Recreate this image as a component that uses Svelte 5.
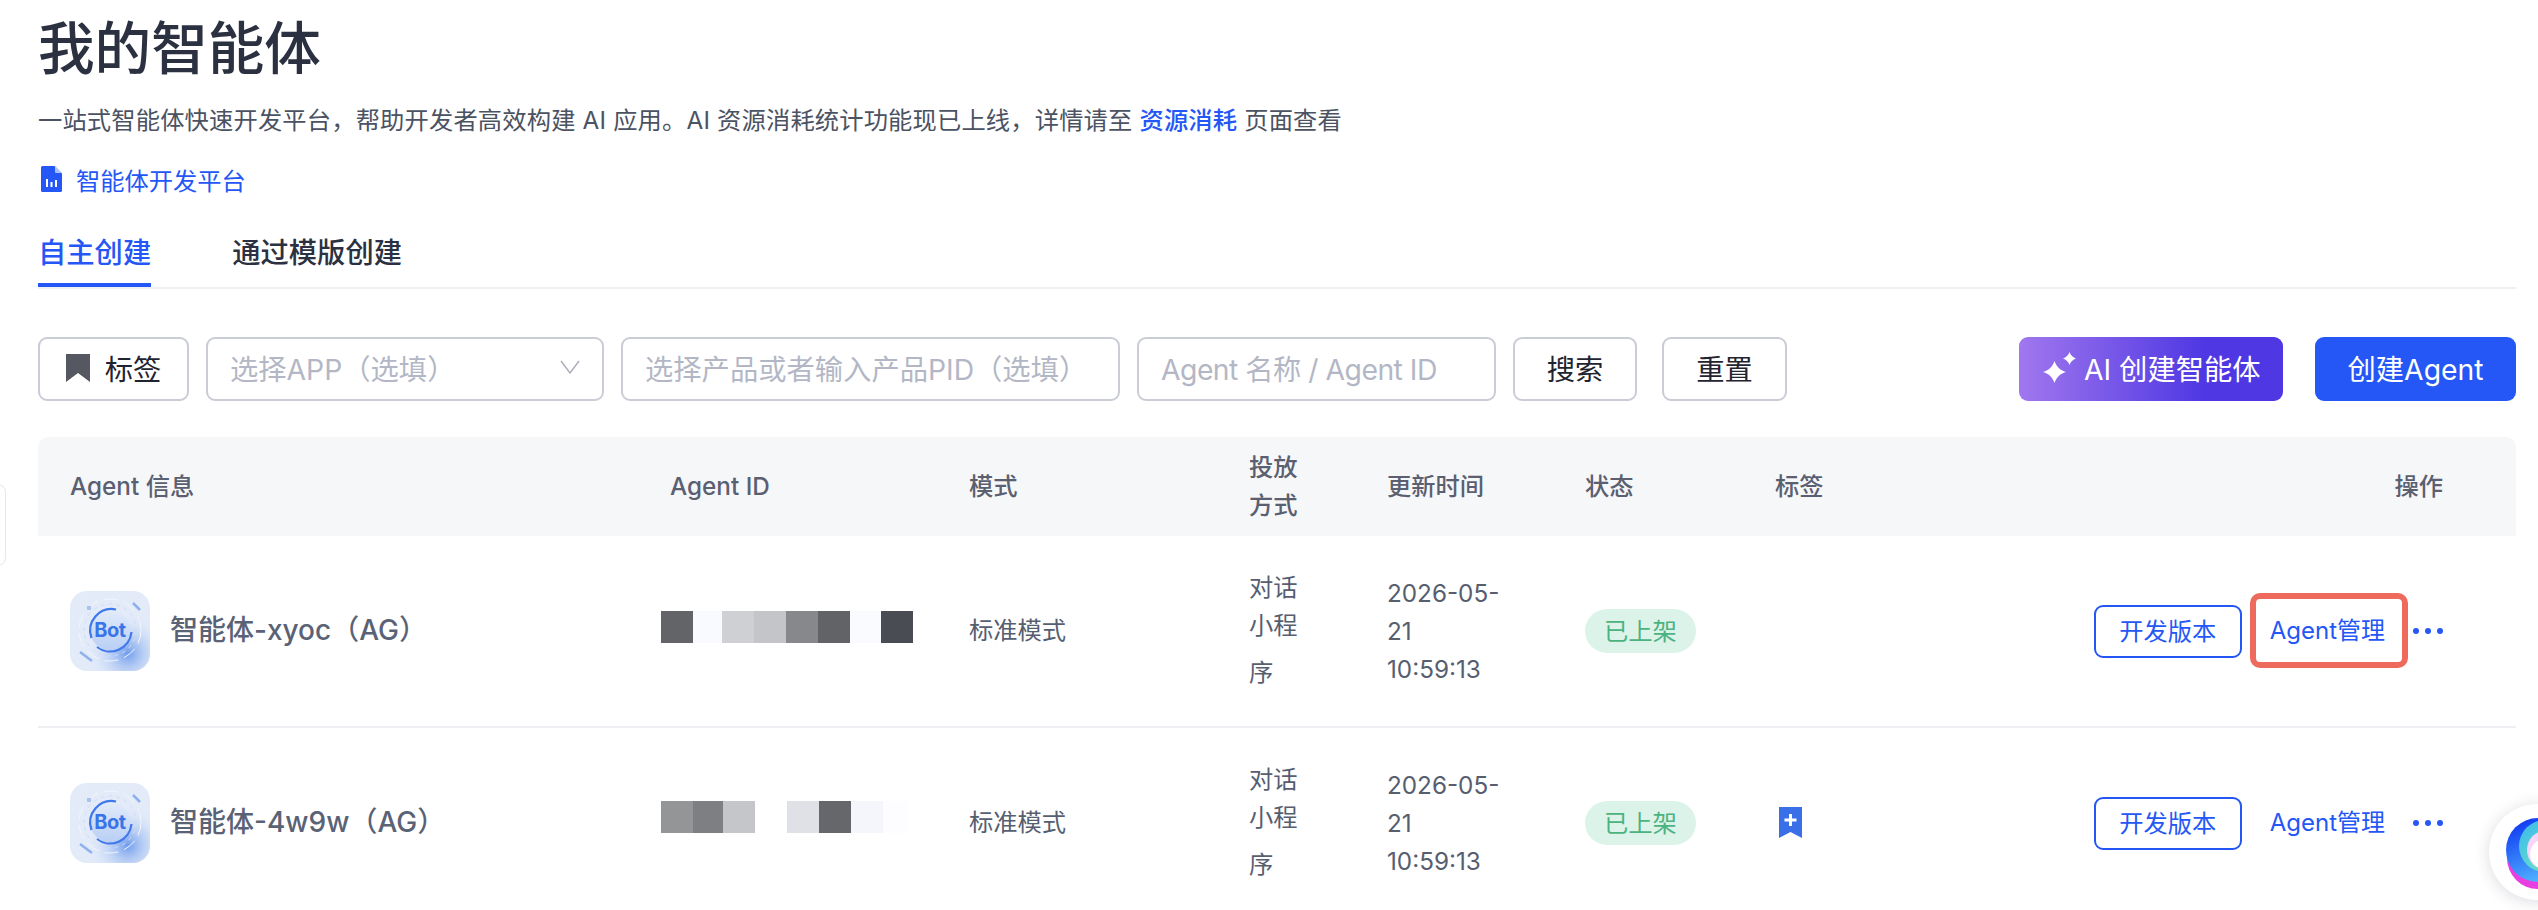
<script>
  const agents = [
    {
      name: '智能体-xyoc（AG）',
      blur: [
        [32, '#636468'], [29, '#f9faff'], [32, '#cfd0d4'], [32, '#c4c5c9'],
        [32, '#87888c'], [32, '#626367'], [31, '#fafbff'], [32, '#4a4c54']
      ],
      blurShift: -8,
      tagged: false,
      highlight: true
    },
    {
      name: '智能体-4w9w（AG）',
      blur: [
        [32, '#949597'], [30, '#7e7f83'], [32, '#c5c6ca'], [32, '#ffffff'],
        [32, '#e0e1e6'], [32, '#66676b'], [32, '#f5f6fc'], [25, '#fdfdff']
      ],
      blurShift: -12,
      tagged: true,
      highlight: false
    }
  ]
</script>

<div class="page">
  <h1 class="title">我的智能体</h1>
  <p class="desc">一站式智能体快速开发平台，帮助开发者高效构建 AI 应用。AI 资源消耗统计功能现已上线，详情请至 <a href="#usage" class="usage">资源消耗</a> 页面查看</p>
  <a href="#platform" class="doc">
    <svg width="21" height="26" viewBox="0 0 21 26">
      <path d="M1.5 0H13.5L21 7.5V24.5A1.5 1.5 0 0 1 19.5 26H1.5A1.5 1.5 0 0 1 0 24.5V1.5A1.5 1.5 0 0 1 1.5 0Z" fill="#2457f5" />
      <path d="M14 0L21 7H15A1 1 0 0 1 14 6Z" fill="#a9c0fb" />
      <path d="M5 13h2v8H5zM9.500 16h2v5h-2zM14 14h2v7h-2z" fill="#fff" />
    </svg>
    智能体开发平台
  </a>

  <nav class="tabs">
    <button class="tab active">自主创建</button>
    <button class="tab">通过模版创建</button>
  </nav>

  <div class="filters">
    <button class="btn tag-btn">
      <svg width="24" height="28" viewBox="0 0 24 28"><path d="M0 0H24V28L12 19L0 28Z" fill="#555860" /></svg>
      标签
    </button>
    <div class="field select">
      <span>选择APP（选填）</span>
      <svg width="20" height="14" viewBox="0 0 20 14"><path d="M1 1L10 13L19 1" fill="none" stroke="#a9adba" stroke-width="1.4" /></svg>
    </div>
    <div class="field product"><span>选择产品或者输入产品PID（选填）</span></div>
    <div class="field name"><span>Agent 名称 / Agent ID</span></div>
    <button class="btn search">搜索</button>
    <button class="btn reset">重置</button>
    <button class="btn ai">
      <svg width="33" height="31" viewBox="0 0 33 31">
        <path d="M11.500 9C13 14 17 18.500 23 20C17 21.500 13 26 11.500 31C10 26 6 21.500 0 20C6 18.500 10 14 11.500 9Z" fill="#fff" />
        <path d="M26.500 0C27.500 3 30 5.500 33 6.500C30 7.500 27.500 10 26.500 13C25.500 10 23 7.500 20 6.500C23 5.500 25.500 3 26.500 0Z" fill="#fff" />
      </svg>
      AI 创建智能体
    </button>
    <button class="btn create">创建Agent</button>
  </div>

  <div class="table">
    <div class="row head">
      <div class="cell">Agent 信息</div>
      <div class="cell">Agent ID</div>
      <div class="cell">模式</div>
      <div class="cell narrow">投放方式</div>
      <div class="cell">更新时间</div>
      <div class="cell">状态</div>
      <div class="cell">标签</div>
      <div class="cell ops">操作</div>
    </div>

    {#each agents as agent}
      <div class="row body">
        <div class="cell info">
          <svg class="avatar" width="80" height="80" viewBox="0 0 80 80">
            <defs>
              <radialGradient id="glow" cx="0.72" cy="0.78" r="0.5">
                <stop offset="0" stop-color="#6f9cec" />
                <stop offset="1" stop-color="#dfe8f8" stop-opacity="0" />
              </radialGradient>
              <linearGradient id="disc" x1="0" y1="0" x2="0" y2="1">
                <stop offset="0" stop-color="#e2ebfa" />
                <stop offset="1" stop-color="#b9cff5" />
              </linearGradient>
            </defs>
            <rect width="80" height="80" rx="17" fill="#e3ebf9" />
            <rect width="80" height="80" rx="17" fill="url(#glow)" />
            <circle cx="40" cy="39" r="31" fill="none" stroke="#f2f6fd" stroke-width="1" stroke-dasharray="14 6" />
            <circle cx="40" cy="39" r="26" fill="none" stroke="#cfdcf4" stroke-width="1" stroke-dasharray="4 4" />
            <circle cx="40" cy="39" r="20" fill="url(#disc)" />
            <path d="M21.500 47A21.500 21.500 0 0 1 46 18.500" fill="none" stroke="#3f78ea" stroke-width="2.200" />
            <path d="M27 56A21.500 21.500 0 0 0 61.500 41" fill="none" stroke="#3f78ea" stroke-width="2.200" />
            <path d="M63 12L70 19M10 61L22 70" stroke="#8db1ee" stroke-width="2.500" />
            <rect x="17" y="15" width="4" height="4" fill="#a9c2ef" />
            <text x="40" y="46" text-anchor="middle" class="bot">Bot</text>
          </svg>
          <span class="agent-name">{agent.name}</span>
        </div>
        <div class="cell"><div class="blur" style="margin-top:{agent.blurShift}px">
          {#each agent.blur as [w, c]}<i style="width:{w}px;background:{c}"></i>{/each}
        </div></div>
        <div class="cell mode">标准模式</div>
        <div class="cell channel"><span>对话</span><span>小程</span><span class="last">序</span></div>
        <div class="cell date">2026-05-21 10:59:13</div>
        <div class="cell"><span class="status">已上架</span></div>
        <div class="cell">
          {#if agent.tagged}
            <svg class="tag-mark" width="23" height="31" viewBox="0 0 23 31">
              <path d="M0 0H23V31L11.500 25L0 31Z" fill="#3a6fe8" />
              <path d="M10 7h3v4.500h4.500v3H13V19h-3v-4.500H5.500v-3H10Z" fill="#fff" />
            </svg>
          {/if}
        </div>
        <div class="cell ops actions">
          <button class="version">开发版本</button>
          <a href="#manage" class="manage" class:marked={agent.highlight}>Agent管理</a>
          <span class="more"><i></i><i></i><i></i></span>
        </div>
      </div>
    {/each}
  </div>

  <div class="side-panel"></div>
  <div class="assistant">
    <svg width="96" height="96" viewBox="0 0 96 96">
      <defs>
        <linearGradient id="blue" x1="0" y1="0" x2="0.4" y2="1">
          <stop offset="0" stop-color="#0a2bf0" />
          <stop offset="1" stop-color="#4db0ff" />
        </linearGradient>
        <linearGradient id="teal" x1="0" y1="0" x2="1" y2="1">
          <stop offset="0" stop-color="#38b6f0" />
          <stop offset="1" stop-color="#7cf3b4" />
        </linearGradient>
      </defs>
      <circle cx="49" cy="54" r="31" fill="#e83fe0" />
      <circle cx="49" cy="46" r="32" fill="url(#blue)" />
      <circle cx="56" cy="42" r="26" fill="url(#teal)" />
      <circle cx="58" cy="46" r="20" fill="#f6d5f6" />
      <circle cx="56" cy="50" r="15" fill="#fff" />
    </svg>
  </div>
</div>

<style>
  :global(body) {
    background: #fff;
  }

  .page {
    position: relative;
    box-sizing: border-box;
    width: 2538px;
    height: 910px;
    overflow: hidden;
    padding: 11px 22px 0 38px;
    font-family: Inter, "Noto Sans CJK SC", sans-serif;
    font-size: 24.28px;
    color: #565e70;
    background: #fff;
  }

  .title {
    margin: 0;
    font-size: 56.6px;
    line-height: 76px;
    font-weight: 500;
    color: #2b3140;
  }

  .desc {
    margin: 14px 0 0;
    line-height: 38px;
    letter-spacing: 0.17px;
    color: #4b5262;
  }

  .usage {
    color: #2457f5;
    font-weight: 500;
    text-decoration: none;
  }

  .doc {
    display: flex;
    align-items: center;
    gap: 14px;
    margin-top: 21px;
    padding-left: 3px;
    height: 38px;
    color: #2457f5;
    text-decoration: none;
  }

  .tabs {
    display: flex;
    gap: 81px;
    margin-top: 36px;
    border-bottom: 2px solid #eeeff3;
  }

  .tab {
    padding: 0 0 11px;
    border: 0;
    border-bottom: 4px solid transparent;
    background: none;
    font: inherit;
    font-size: 28.3px;
    line-height: 38px;
    font-weight: 500;
    color: #2b3140;
  }

  .tab.active {
    color: #2457f5;
    border-bottom-color: #2457f5;
  }

  .filters {
    display: flex;
    gap: 17px;
    margin-top: 48px;
    height: 64px;
  }

  .btn,
  .field {
    box-sizing: border-box;
    display: flex;
    align-items: center;
    height: 64px;
    border: 2px solid #caccd6;
    border-radius: 9px;
    background: #fff;
    font: inherit;
    font-size: 28.3px;
    padding-bottom: 4px;
  }

  .btn {
    justify-content: center;
    color: #1f2430;
  }

  .tag-btn {
    width: 151px;
    gap: 15px;
  }

  .field {
    padding-left: 22px;
    padding-right: 22px;
    color: #b3b7c5;
    white-space: nowrap;
  }

  .select {
    width: 398px;
    justify-content: space-between;
  }

  .product {
    width: 499px;
  }

  .name {
    width: 359px;
    letter-spacing: -0.5px;
  }

  .search {
    width: 124px;
  }

  .reset {
    width: 125px;
    margin-left: 8px;
  }

  .ai {
    width: 264px;
    margin-left: auto;
    justify-content: flex-start;
    padding-left: 24px;
    gap: 8px;
    border: 0;
    color: #fff;
    background: linear-gradient(90deg, #a077ee 0%, #4f38e3 70%);
  }

  .create {
    width: 201px;
    margin-left: 15px;
    border: 0;
    color: #fff;
    background: #2457f5;
  }

  .table {
    margin-top: 36px;
  }

  .row {
    display: grid;
    grid-template-columns: 600px 299px 280px 138px 198px 190px 1fr 580px;
    align-items: center;
  }

  .head {
    box-sizing: border-box;
    height: 99px;
    padding-bottom: 2px;
    background: #f6f7f9;
    border-radius: 10px 10px 0 0;
    font-weight: 500;
    line-height: 38px;
    color: #5a6070;
  }

  .body {
    box-sizing: border-box;
    height: 192px;
    border-bottom: 2px solid #eeeff3;
    line-height: 38px;
  }

  .cell {
    padding-left: 32px;
  }

  .narrow,
  .channel {
    padding-right: 50px;
  }

  .channel {
    margin-top: -4px;
  }

  .channel span {
    display: block;
  }

  .channel .last {
    margin-top: 9px;
  }

  .date {
    padding-right: 50px;
  }

  .mode {
    padding-bottom: 2px;
  }

  .ops {
    padding: 0 73px 0 0;
    text-align: right;
  }

  .info {
    display: flex;
    align-items: center;
    gap: 20px;
  }

  .avatar {
    flex: none;
  }

  .bot {
    font-size: 20px;
    font-weight: 700;
    letter-spacing: -0.5px;
    fill: #3a74ea;
  }

  .agent-name {
    padding-bottom: 2px;
    font-size: 28px;
    font-weight: 500;
    color: #5a6275;
  }

  .blur {
    display: flex;
    height: 32px;
    margin-left: -9px;
  }

  .blur i {
    display: block;
  }

  .status {
    display: inline-block;
    padding: 0 19px;
    height: 44px;
    line-height: 44px;
    border-radius: 22px;
    background: #dcf3ea;
    color: #4cb27f;
    vertical-align: middle;
  }

  .tag-mark {
    display: block;
    margin: -2px 0 0 4px;
  }

  .actions {
    display: flex;
    align-items: center;
    justify-content: flex-end;
  }

  .version {
    box-sizing: border-box;
    width: 148px;
    height: 53px;
    border: 2px solid #2457f5;
    border-radius: 9px;
    background: #fff;
    font: inherit;
    color: #2457f5;
  }

  .manage {
    position: relative;
    margin: 0 28px;
    font-size: 24px;
    color: #2457f5;
    text-decoration: none;
    white-space: nowrap;
  }

  .marked::after {
    content: "";
    position: absolute;
    left: -20px;
    right: -23px;
    top: -19px;
    bottom: -18px;
    border: 6px solid #ee6a5c;
    border-radius: 10px;
  }

  .more {
    display: flex;
    gap: 6px;
  }

  .more i {
    width: 6px;
    height: 6px;
    border-radius: 50%;
    background: #2457f5;
  }

  .side-panel {
    position: absolute;
    left: -10px;
    top: 484px;
    width: 14px;
    height: 80px;
    border: 1px solid #e6e7ec;
    border-radius: 8px;
  }

  .assistant {
    position: absolute;
    left: 2489px;
    top: 804px;
    width: 96px;
    height: 96px;
    border-radius: 50%;
    background: #fff;
    box-shadow: 0 2px 16px rgba(30, 40, 70, 0.16);
    overflow: hidden;
  }
</style>
